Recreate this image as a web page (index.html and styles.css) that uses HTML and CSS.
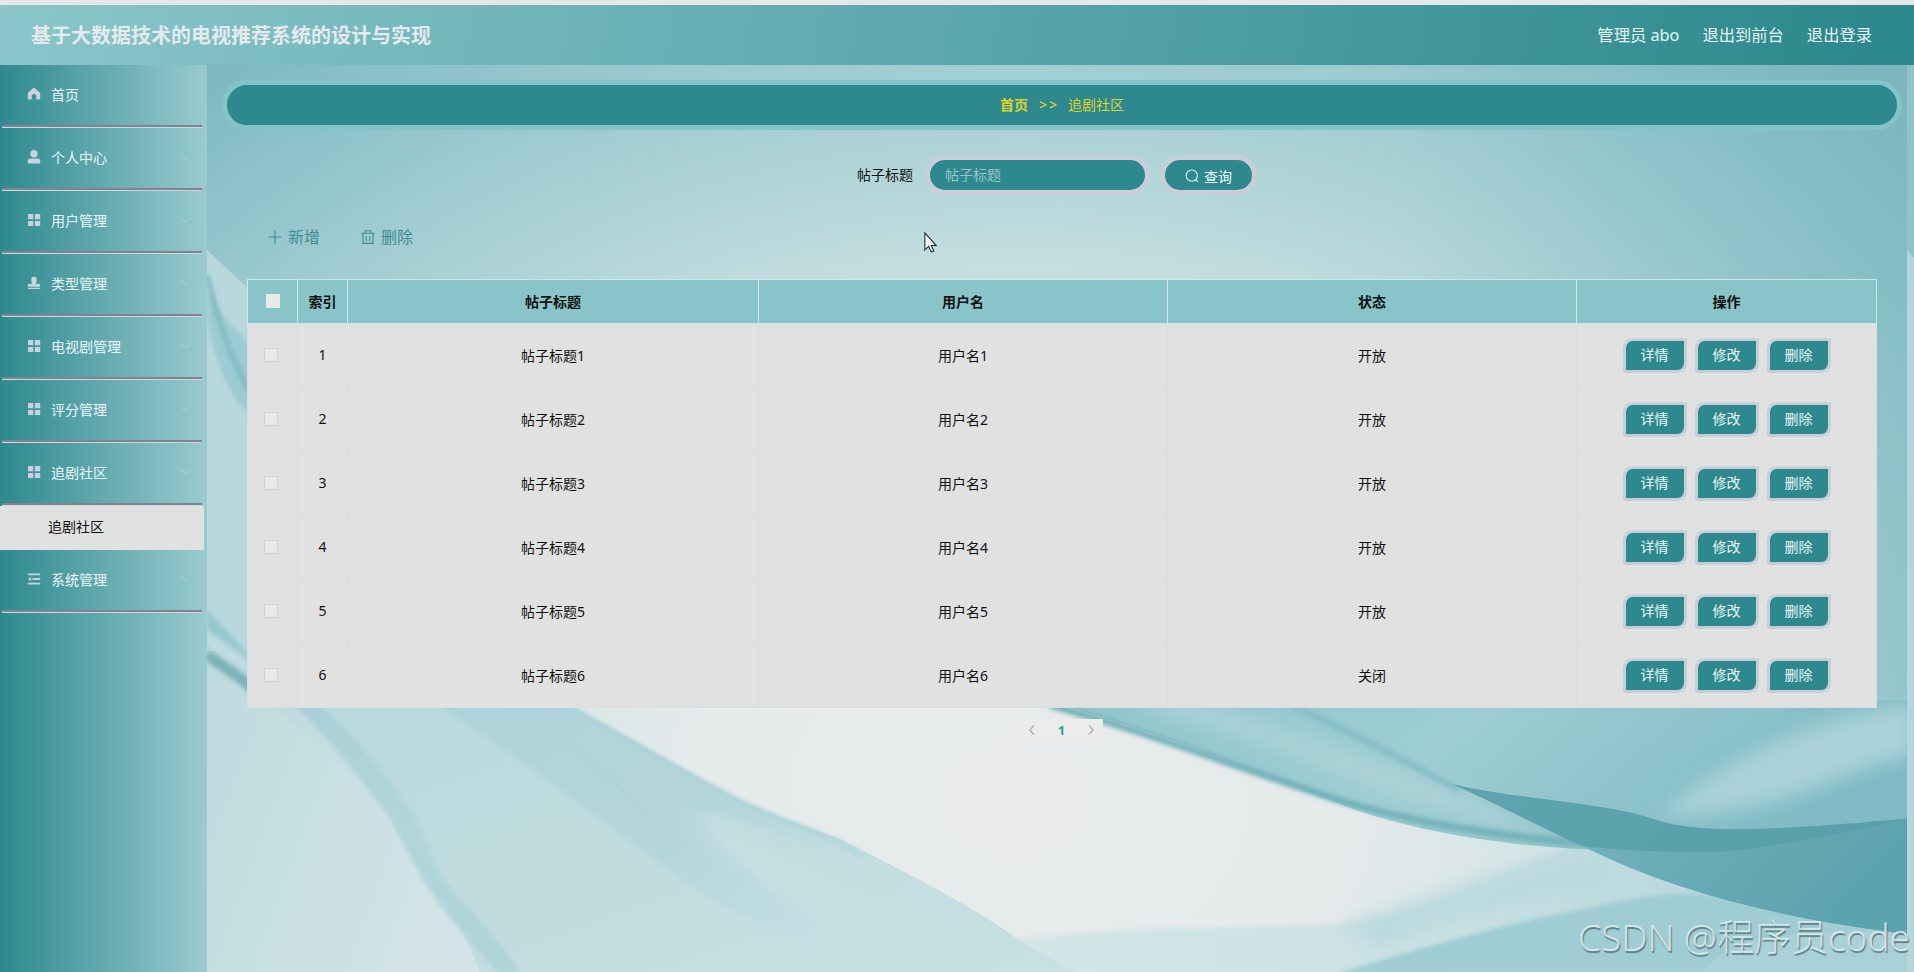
FILE: index.html
```html
<!DOCTYPE html>
<html lang="zh-CN">
  <head>
    <meta charset="utf-8">
    <title>基于大数据技术的电视推荐系统的设计与实现</title>
    <link rel="stylesheet" href="styles.css">
  </head>
  <body>
    <!-- icon sprite -->
    <svg class="sprite">
      <symbol id="i-home" viewBox="0 0 14 14"><path d="M7 .6 13.2 5.8V12.6H9.3V9.2a2.3 2.3 0 0 0-4.6 0v3.4H.8V5.8z"/></symbol>
      <symbol id="i-user" viewBox="0 0 14 14"><circle cx="7" cy="3.8" r="3.7"/><path d="M.8 13.6V11a2.6 2.6 0 0 1 2.6-2.6h7.2A2.6 2.6 0 0 1 13.2 11v2.6z"/></symbol>
      <symbol id="i-grid" viewBox="0 0 14 14"><path d="M1 1h5.3v5.2H1zM7.9 1h5.3v5.2H7.9zM1 7.9h5.3v5.2H1zM7.9 7.9h5.3v5.2H7.9z"/></symbol>
      <symbol id="i-stamp" viewBox="0 0 14 14"><path d="M5.4 7.7 4.3 5V2.6A2 2 0 0 1 6.3.8h1.4a2 2 0 0 1 2 1.8V5L8.6 7.7h3A1.6 1.6 0 0 1 13.2 9.3v1.5H.8V9.3a1.6 1.6 0 0 1 1.6-1.6zM.8 11.8h12.4V13H.8z"/></symbol>
      <symbol id="i-fold" viewBox="0 0 14 14"><path d="M.8 1.4h12.4v1.8H.8zM5.4 6.1h7.8v1.8H5.4zM.8 10.8h12.4v1.8H.8zM.8 7l3.4-2v4z"/></symbol>
      <symbol id="i-down" viewBox="0 0 12 12"><path d="M1.5 3.8 6 8.2l4.5-4.4" fill="none" stroke="currentColor"/></symbol>
    </svg>

    <div class="header">
      <h1>基于大数据技术的电视推荐系统的设计与实现</h1>
      <div class="user">
        <span>管理员 abo</span>
        <span>退出到前台</span>
        <span>退出登录</span>
      </div>
    </div>

    <div class="wrap">
      <ul class="sidebar">
        <li class="item"><svg class="ico"><use href="#i-home"/></svg>首页</li>
        <li class="item"><svg class="ico"><use href="#i-user"/></svg>个人中心<svg class="arrow"><use href="#i-down"/></svg></li>
        <li class="item"><svg class="ico"><use href="#i-grid"/></svg>用户管理<svg class="arrow"><use href="#i-down"/></svg></li>
        <li class="item"><svg class="ico"><use href="#i-stamp"/></svg>类型管理<svg class="arrow"><use href="#i-down"/></svg></li>
        <li class="item"><svg class="ico"><use href="#i-grid"/></svg>电视剧管理<svg class="arrow"><use href="#i-down"/></svg></li>
        <li class="item"><svg class="ico"><use href="#i-grid"/></svg>评分管理<svg class="arrow"><use href="#i-down"/></svg></li>
        <li class="item"><svg class="ico"><use href="#i-grid"/></svg>追剧社区<svg class="arrow"><use href="#i-down"/></svg></li>
        <li class="sub">追剧社区</li>
        <li class="item"><svg class="ico"><use href="#i-fold"/></svg>系统管理<svg class="arrow"><use href="#i-down"/></svg></li>
      </ul>

      <div class="main">
        <!-- silk backdrop -->
        <svg class="bg" viewBox="207 65 1707 907" preserveAspectRatio="none">
          <defs>
            <radialGradient id="base" gradientUnits="userSpaceOnUse" cx="0" cy="0" r="1" gradientTransform="translate(1020 800) scale(1400 1075)">
              <stop offset="0" stop-color="#e9ebec"/>
              <stop offset=".24" stop-color="#e5eaeb"/>
              <stop offset=".47" stop-color="#cae0e2"/>
              <stop offset=".59" stop-color="#b2d5d9"/>
              <stop offset=".71" stop-color="#9dcbd0"/>
              <stop offset=".8" stop-color="#8dc2c8"/>
              <stop offset=".92" stop-color="#7cb3bd"/>
              <stop offset="1" stop-color="#76aeb9"/>
            </radialGradient>
            <linearGradient id="side" x1="0" x2="1" y1="0" y2="0">
              <stop offset="0" stop-color="#7fb9c1" stop-opacity="0"/>
              <stop offset="1" stop-color="#7cb8be" stop-opacity=".5"/>
            </linearGradient>
            <linearGradient id="lowleft" x1="0" x2="1" y1="0" y2=".4">
              <stop offset="0" stop-color="#bddade"/>
              <stop offset="1" stop-color="#d3e4e8"/>
            </linearGradient>
            <linearGradient id="veil" x1="0" x2="1" y1="0" y2="1">
              <stop offset="0" stop-color="#b9d9dd"/>
              <stop offset=".55" stop-color="#c1dcdf"/>
              <stop offset="1" stop-color="#c8e0e4"/>
            </linearGradient>
            <linearGradient id="bandA" x1="0" x2=".7" y1="0" y2="1">
              <stop offset="0" stop-color="#8cc4c9"/>
              <stop offset=".4" stop-color="#a8d0d7"/>
              <stop offset="1" stop-color="#b8d8dc"/>
            </linearGradient>
            <linearGradient id="bandB" x1="0" x2="1" y1="0" y2=".7">
              <stop offset="0" stop-color="#add3d9"/>
              <stop offset=".6" stop-color="#b5d6db"/>
              <stop offset="1" stop-color="#c5dfe3"/>
            </linearGradient>
            <linearGradient id="right" x1="0" x2="1" y1="0" y2=".2">
              <stop offset="0" stop-color="#8ec5ca"/>
              <stop offset=".5" stop-color="#9dcdd1"/>
              <stop offset="1" stop-color="#80bac4"/>
            </linearGradient>
            <linearGradient id="dark" x1="0" x2="1" y1="0" y2=".3">
              <stop offset="0" stop-color="#7cb9c0"/>
              <stop offset="1" stop-color="#5da2af"/>
            </linearGradient>
            <linearGradient id="low" x1="0" x2="1" y1="0" y2="0">
              <stop offset="0" stop-color="#d3e6e7"/>
              <stop offset=".5" stop-color="#cbe1e4"/>
              <stop offset="1" stop-color="#a9d1d7"/>
            </linearGradient>
            <filter id="b2" x="-10%" y="-10%" width="120%" height="120%"><feGaussianBlur stdDeviation="2"/></filter>
            <filter id="b8" x="-30%" y="-30%" width="160%" height="160%"><feGaussianBlur stdDeviation="9"/></filter>
          </defs>
          <rect x="207" y="65" width="1707" height="907" fill="url(#base)"/>
          <rect x="1400" y="65" width="514" height="650" fill="url(#side)"/>

          <!-- folds along the left edge -->
          <path d="M207 250 250 290V700L207 640z" fill="#b9d8de"/>
          <path d="M207 290C220 320 240 330 250 345V425C228 400 212 350 207 320z" fill="#9bccd1" filter="url(#b2)"/>
          <path d="M207 275C220 330 232 360 250 392" fill="none" stroke="#82b9c2" stroke-width="5" filter="url(#b2)"/>
          <path d="M207 340C215 370 230 395 250 415V500C230 470 212 440 207 400z" fill="#b7d8dd" filter="url(#b2)"/>

          <!-- bottom sweep -->
          <path d="M970 955C1000 935 1060 935 1120 930 1220 925 1300 930 1380 918 1450 900 1500 872 1575 845L1914 935V974H970z" fill="url(#low)" filter="url(#b2)"/>
          <path d="M1340 925C1430 900 1500 865 1590 850L1640 885C1540 890 1440 925 1380 950z" fill="#bcdade" filter="url(#b8)"/>
          <path d="M1400 925C1460 905 1510 880 1585 852" fill="none" stroke="#c0dbe2" stroke-width="4" filter="url(#b2)"/>
          <path d="M1335 974C1430 945 1500 925 1570 912 1640 895 1700 885 1760 905L1914 940V974z" fill="#9fcdd3" filter="url(#b2)"/>
          <path d="M1700 974C1730 940 1760 930 1914 932V974z" fill="#a9d1d7"/>

          <!-- left silk -->
          <path d="M207 660C260 700 330 740 392 822 410 850 418 875 440 910L500 972H207z" fill="url(#lowleft)"/>
          <path d="M310 700H560C630 738 700 780 745 802 800 828 830 832 858 848 920 880 980 910 1023 943L1074 972H480C450 900 400 790 310 700z" fill="url(#veil)"/>
          <path d="M430 700H560C630 738 700 780 745 802 790 822 830 832 862 854 800 848 760 820 700 812 720 850 800 930 900 960 820 950 740 920 690 885 600 822 540 770 430 700z" fill="url(#bandB)" filter="url(#b2)"/>
          <path d="M680 812C760 850 840 880 940 955 850 930 760 890 680 812z" fill="#c7dfe3" filter="url(#b8)"/>
          <path d="M560 702C630 740 700 782 745 804 790 826 830 834 862 856" fill="none" stroke="#a9d1d6" stroke-width="3" filter="url(#b2)"/>
          <path d="M560 740C600 762 620 790 650 820" fill="none" stroke="#a9cfd7" stroke-width="2" filter="url(#b2)"/>
          <path d="M207 630C240 650 270 680 290 700 335 745 370 790 392 822 415 862 425 900 500 972H512C470 920 440 880 430 850 415 810 370 750 322 707L250 655 207 610z" fill="url(#bandA)" fill-opacity=".9" filter="url(#b2)"/>
          <path d="M390 815C415 845 440 880 465 905 490 930 510 955 520 974H500C450 920 420 870 390 815z" fill="#b0d4d9" filter="url(#b2)"/>
          <path d="M207 640 250 668" fill="none" stroke="#bfdce0" stroke-width="8" filter="url(#b2)"/>
          <path d="M207 655C225 668 240 676 254 690" fill="none" stroke="#7ab4ba" stroke-width="11" filter="url(#b2)"/>

          <!-- right silk -->
          <path d="M1042 700H1914V850H1600C1480 845 1400 826 1345 806 1250 770 1150 728 1042 700z" fill="url(#right)"/>
          <path d="M1120 700H1190C1300 730 1400 770 1460 790 1500 810 1540 830 1560 838 1480 828 1400 800 1340 777 1260 739 1190 722 1120 700z" fill="#abd2d7" filter="url(#b8)"/>
          <path d="M1290 705C1360 735 1420 770 1460 790" fill="none" stroke="#86bfc7" stroke-width="7" filter="url(#b2)"/>
          <path d="M1050 705C1150 732 1250 773 1345 802 1420 824 1500 836 1580 843" fill="none" stroke="#72b1ba" stroke-width="7" filter="url(#b2)"/>
          <path d="M1660 815C1730 755 1810 720 1914 703V755C1850 765 1790 815 1660 815z" fill="#aad2d8" filter="url(#b8)"/>
          <path d="M1452 784C1520 800 1600 802 1650 818 1690 832 1740 834 1914 818V935C1790 920 1680 895 1582 846 1545 830 1500 805 1452 784z" fill="url(#dark)"/>
          <path d="M1452 784C1520 800 1600 802 1650 818 1690 832 1740 834 1914 818 1830 835 1760 852 1700 852 1640 852 1600 848 1582 846 1545 830 1500 805 1452 784z" fill="#559da8" fill-opacity=".75"/>

          <!-- next tile -->
          <path d="M1907 65H1914V972H1907z" fill="#8fc2ca"/>
          <path d="M1907 250 1914 258V972H1907z" fill="#b5d6dc"/>
        </svg>

        <div class="crumb"><b>首页</b><i>&gt;&gt;</i><span>追剧社区</span></div>

        <div class="search">
          <label>帖子标题</label>
          <input type="text" placeholder="帖子标题">
          <button><svg viewBox="0 0 14 14"><circle cx="6.8" cy="6.6" r="5.6"/><path d="m10.8 10.6 2 2.2"/></svg>查询</button>
        </div>

        <div class="tools">
          <a><svg viewBox="0 0 14 14"><path d="M7 .5v13M.5 7h13"/></svg>新增</a>
          <a><svg viewBox="0 0 14 14"><path d="M.5 3.2h13M4.3 3V.8h5.4V3M2 3.5v9.9h10V3.5M5.3 6v5M8.7 6v5"/></svg>删除</a>
        </div>

        <table>
          <colgroup><col class="c-check"><col class="c-idx"><col class="c-title"><col class="c-mid"><col class="c-mid"><col></colgroup>
          <thead>
            <tr><th><span class="check"></span></th><th>索引</th><th>帖子标题</th><th>用户名</th><th>状态</th><th>操作</th></tr>
          </thead>
          <tbody>
            <tr><td><span class="check"></span></td><td>1</td><td>帖子标题1</td><td>用户名1</td><td>开放</td><td><div class="ops"><a>详情</a><a>修改</a><a>删除</a></div></td></tr>
            <tr><td><span class="check"></span></td><td>2</td><td>帖子标题2</td><td>用户名2</td><td>开放</td><td><div class="ops"><a>详情</a><a>修改</a><a>删除</a></div></td></tr>
            <tr><td><span class="check"></span></td><td>3</td><td>帖子标题3</td><td>用户名3</td><td>开放</td><td><div class="ops"><a>详情</a><a>修改</a><a>删除</a></div></td></tr>
            <tr><td><span class="check"></span></td><td>4</td><td>帖子标题4</td><td>用户名4</td><td>开放</td><td><div class="ops"><a>详情</a><a>修改</a><a>删除</a></div></td></tr>
            <tr><td><span class="check"></span></td><td>5</td><td>帖子标题5</td><td>用户名5</td><td>开放</td><td><div class="ops"><a>详情</a><a>修改</a><a>删除</a></div></td></tr>
            <tr><td><span class="check"></span></td><td>6</td><td>帖子标题6</td><td>用户名6</td><td>关闭</td><td><div class="ops"><a>详情</a><a>修改</a><a>删除</a></div></td></tr>
          </tbody>
        </table>

        <div class="pager">
          <svg viewBox="0 0 12 12"><path d="M8 1.5 3.8 6 8 10.5"/></svg>
          <b>1</b>
          <svg viewBox="0 0 12 12"><path d="M4 1.5 8.2 6 4 10.5"/></svg>
        </div>
      </div>
    </div>

    <svg class="cursor" viewBox="0 0 12 20"><path d="M.6.8v16.4l3.6-3.4 2.6 5.4 2.4-1.1-2.5-5.2h4.8z"/></svg>
    <div class="mark">CSDN @程序员code</div>
  </body>
</html>
```
FILE: styles.css
```css
* {
  box-sizing: border-box;
}
html {
  overflow: hidden;
}
body {
  margin: 0;
  height: 972px;
  overflow: hidden;
  position: relative;
  display: flex;
  flex-direction: column;
  border-top: 5px solid #e6e7e8;
  font-family: "Noto Sans", "Noto Sans CJK SC", sans-serif;
  font-size: 14px;
  color: #111;
}
.sprite {
  display: none;
}
.header {
  height: 60px;
  flex: none;
  display: flex;
  justify-content: space-between;
  align-items: center;
  padding: 0 42px 0 31px;
  background: linear-gradient(100deg, #8ac6ca, #5faab0 45%, #2d898d 97%);
  color: #e6f4f6;
}
.header h1 {
  margin: 0;
  padding-top: 2px;
  font-size: 20px;
  line-height: 30px;
  color: #e4eaed;
}
.user {
  display: flex;
  gap: 23px;
  padding-bottom: 2px;
  font-size: 16.3px;
}
.wrap {
  flex: 1;
  display: flex;
  min-height: 0;
}

.sidebar {
  width: 207px;
  flex: none;
  margin: 0;
  padding: 0;
  list-style: none;
  background: linear-gradient(90deg, #2d898e, #9acbcf);
}
.item {
  height: 62px;
  width: 200px;
  margin: 0 0 1px 2px;
  padding: 0 10px 2px 25px;
  display: flex;
  align-items: center;
  border-bottom: 2px solid #88808e;
  box-shadow: 0 1px 0 #c5dce0;
  color: #e9f8fa;
}
.item .ico {
  width: 14px;
  height: 14px;
  margin-right: 10px;
  fill: #c8d3dd;
}
.item .arrow {
  width: 12px;
  height: 12px;
  margin-left: auto;
  color: #b3d2d8;
}
.sub {
  height: 44px;
  width: 204px;
  padding-left: 48px;
  line-height: 42px;
  background: #e1e1e1;
}

.main {
  flex: 1;
  position: relative;
  padding: 15px 12px 0 15px;
}
.bg {
  position: absolute;
  left: 0;
  top: 0;
  width: 100%;
  height: 100%;
  z-index: -1;
}
.crumb {
  height: 50px;
  padding-bottom: 2px;
  display: flex;
  justify-content: center;
  align-items: center;
  border: 5px solid #84c4c9;
  border-radius: 30px;
  background: #2d898e;
  color: #dfd22a;
}
.crumb i {
  margin: 0 9px 0 11px;
  font-style: normal;
  font-weight: 500;
  letter-spacing: 2px;
}
.search {
  display: flex;
  align-items: center;
  margin: 25px 0 0 635px;
}
.search label {
  width: 68px;
  padding-bottom: 2px;
}
.search input {
  width: 225px;
  height: 40px;
  padding: 0 15px 2px;
  border: 5px solid #c9cfd8;
  border-radius: 20px;
  background: #2d898e;
  font: inherit;
}
.search input::placeholder {
  color: #9fc0c8;
}
.search button {
  width: 97px;
  height: 40px;
  margin-left: 10px;
  padding: 2px 0 0;
  display: flex;
  align-items: center;
  justify-content: center;
  border: 5px solid #c9cfd8;
  border-radius: 20px;
  background: #2d898e;
  font: inherit;
  color: #f0fafa;
}
.search svg,
.tools svg,
.pager svg {
  width: 14px;
  height: 14px;
  fill: none;
  stroke: currentColor;
  stroke-width: 1.1;
}
.search svg {
  margin-right: 5px;
}
.tools {
  display: flex;
  gap: 41px;
  margin: 30px 0 0 46px;
  font-size: 16px;
  line-height: 24px;
  color: #3d8e95;
}
.tools a {
  display: flex;
  align-items: center;
  gap: 6px;
}

table {
  width: 1630px;
  margin: 30px 0 0 25px;
  table-layout: fixed;
  border-collapse: collapse;
  text-align: center;
  background: #e1e1e1;
}
.c-check,
.c-idx {
  width: 50px;
}
.c-title {
  width: 411px;
}
.c-mid {
  width: 409px;
}
th,
td {
  padding: 0 0 2px;
  border: 1px solid #dadde0;
}
td:last-child {
  padding: 0;
}
th {
  height: 44px;
  border-color: #cfe5e8;
  background: #88c4c8;
}
td {
  height: 64px;
}
.check {
  display: block;
  width: 14px;
  height: 14px;
  margin: 0 0 0 16px;
  border: 1px solid #cfd1d4;
  background: #e9e9ea;
}
th .check {
  margin-left: 18px;
  border-color: #e9e9ea;
}
.ops {
  display: flex;
  justify-content: center;
  gap: 8px;
}
.ops a {
  width: 64px;
  height: 35px;
  line-height: 28px;
  border: 3px solid #c5d0d8;
  border-radius: 10px 0;
  background: #2d898e;
  color: #eaf7f8;
}

.pager {
  width: 81px;
  height: 23px;
  margin: 11px 0 0 800px;
  padding: 0 6px 2px 4px;
  display: flex;
  align-items: center;
  justify-content: space-between;
  background: #ececec;
  font-size: 13px;
  color: #a9abae;
}
.pager svg {
  width: 12px;
  height: 12px;
}
.pager b {
  color: #26a69a;
}

.cursor {
  position: absolute;
  left: 924px;
  top: 227px;
  width: 13px;
  height: 21px;
  fill: #edf1f3;
  stroke: #1c2a30;
  stroke-width: 1;
}
.mark {
  position: absolute;
  right: 4px;
  bottom: 8px;
  font-size: 37px;
  font-weight: 300;
  line-height: 54px;
  color: rgba(226, 236, 240, .85);
  text-shadow: 1px 2px 1px rgba(70, 100, 110, .75);
}
```
